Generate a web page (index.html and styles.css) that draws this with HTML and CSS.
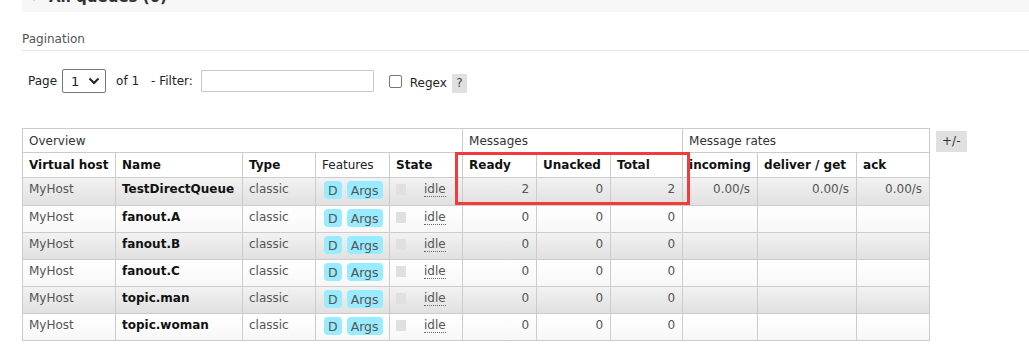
FILE: index.html
```html
<!DOCTYPE html>
<html lang="en">
<head>
    <meta charset="UTF-8">
    <title>Queues</title>
    <link rel="stylesheet" href="styles.css">
</head>
<body>
    <div class="section-head">
        <span class="arrow"></span>
        <h2>All queues (6)</h2>
    </div>

    <h3 class="pagination-title">Pagination</h3>

    <div class="filter-row">
        <span class="label">Page</span>
        <span class="select">1
            <svg width="12" height="8" viewBox="0 0 12 8"><path d="M1.5 1.5 L6 6 L10.5 1.5" fill="none" stroke="#222" stroke-width="2"/></svg>
        </span>
        <span class="label of">of 1</span>
        <span class="label">- Filter:</span>
        <input type="text" class="filter-input">
        <span class="checkbox"></span>
        <span class="label regex">Regex</span>
        <span class="help">?</span>
    </div>

    <div class="table-wrap">
        <div class="table-box">
            <table class="list">
                <colgroup>
                    <col style="width:93px"><col style="width:127px"><col style="width:73px"><col style="width:74px"><col style="width:73px">
                    <col style="width:74px"><col style="width:74px"><col style="width:72px">
                    <col style="width:75px"><col style="width:99px"><col style="width:73px">
                </colgroup>
                <thead>
                    <tr class="group">
                        <th colspan="5">Overview</th>
                        <th colspan="3">Messages</th>
                        <th colspan="3">Message rates</th>
                    </tr>
                    <tr class="cols">
                        <th>Virtual host</th>
                        <th>Name</th>
                        <th>Type</th>
                        <th class="plain">Features</th>
                        <th>State</th>
                        <th>Ready</th>
                        <th>Unacked</th>
                        <th>Total</th>
                        <th>incoming</th>
                        <th>deliver / get</th>
                        <th>ack</th>
                    </tr>
                </thead>
                <tbody id="rows"></tbody>
            </table>
            <div class="highlight"></div>
        </div>
        <span class="toggle">+/-</span>
    </div>

    <script>
        var queues = [
            { name: 'TestDirectQueue', ready: 2, unacked: 0, total: 2, rates: true },
            { name: 'fanout.A', ready: 0, unacked: 0, total: 0 },
            { name: 'fanout.B', ready: 0, unacked: 0, total: 0 },
            { name: 'fanout.C', ready: 0, unacked: 0, total: 0 },
            { name: 'topic.man', ready: 0, unacked: 0, total: 0 },
            { name: 'topic.woman', ready: 0, unacked: 0, total: 0 }
        ];

        var html = '';
        queues.forEach(function(q, i) {
            var rate = q.rates ? '0.00/s' : '';
            var cls = (i % 2 === 0 ? 'alt1' : 'alt2') + (i === 0 ? ' first' : '');
            html += '<tr class="' + cls + '">' +
                '<td class="muted">MyHost</td>' +
                '<td class="name">' + q.name + '</td>' +
                '<td class="muted">classic</td>' +
                '<td class="features"><abbr class="badge">D</abbr><abbr class="badge">Args</abbr></td>' +
                '<td class="state"><span class="state-box"></span><abbr class="idle">idle</abbr></td>' +
                '<td class="num">' + q.ready + '</td>' +
                '<td class="num">' + q.unacked + '</td>' +
                '<td class="num">' + q.total + '</td>' +
                '<td class="num">' + rate + '</td>' +
                '<td class="num">' + rate + '</td>' +
                '<td class="num">' + rate + '</td>' +
                '</tr>';
        });
        document.getElementById('rows').innerHTML = html;
    </script>
</body>
</html>
```

FILE: styles.css
```css
body {
    margin: 0;
    padding-left: 22px;
    font-family: "DejaVu Sans", Verdana, sans-serif;
    font-size: 12px;
    color: #484848;
    background: #fff;
}
.section-head {
    display: flex;
    align-items: center;
    height: 30px;
    margin-top: -18px;
    background-color: #f7f7f7;
    padding-left: 8px;
}
.section-head h2 {
    margin: 0;
    font-size: 15px;
    font-weight: bold;
    color: #333;
}
.arrow {
    width: 0;
    height: 0;
    border-left: 4px solid transparent;
    border-right: 4px solid transparent;
    border-top: 5px solid #aaa;
    margin-right: 11px;
    margin-top: 2px;
}
.pagination-title {
    margin: 20px 0 0 0;
    padding-bottom: 4px;
    font-size: 12px;
    font-weight: normal;
    color: #555;
    border-bottom: 1px solid #e2e2e2;
}
.filter-row {
    display: flex;
    align-items: center;
    margin-top: 17px;
    padding-left: 6px;
    height: 26px;
    color: #222;
}
.label {
    font-size: 12px;
}
.select {
    display: flex;
    align-items: center;
    justify-content: space-between;
    box-sizing: border-box;
    width: 44px;
    height: 24px;
    margin-left: 5px;
    padding: 0 5px 0 8px;
    border: 1px solid #767676;
    border-radius: 2px;
    font-size: 13px;
}
.of {
    margin-left: 10px;
    margin-right: 12px;
}
.filter-input {
    box-sizing: border-box;
    width: 173px;
    height: 22px;
    margin: 0 0 0 8px;
    border: 1px solid #c8c8c8;
    border-radius: 1px;
    padding: 0;
}
.checkbox {
    box-sizing: border-box;
    width: 13px;
    height: 13px;
    margin-left: 15px;
    border: 1px solid #767676;
    border-radius: 2px;
}
.regex {
    margin-left: 8px;
    margin-top: 4px;
}
.help {
    display: flex;
    align-items: center;
    justify-content: center;
    width: 15px;
    height: 19px;
    margin-left: 5px;
    margin-top: 4px;
    background-color: #e0e0e0;
    color: #444;
}
.table-wrap {
    display: flex;
    align-items: flex-start;
    margin-top: 34px;
}
.table-box {
    position: relative;
}
table.list {
    border-collapse: collapse;
    table-layout: fixed;
    width: 907px;
}
table.list th,
table.list td {
    border: 1px solid #cccccc;
    padding: 0 6px;
    text-align: left;
    white-space: nowrap;
    overflow: hidden;
}
table.list th {
    background: #fff;
    color: #111;
}
tr.group th {
    height: 23px;
    font-weight: normal;
    color: #333;
}
tr.cols th {
    height: 24px;
    font-weight: bold;
}
tr.cols th.plain {
    font-weight: normal;
    color: #222;
}
table.list td {
    height: 27px;
    vertical-align: top;
    padding-top: 4px;
    padding-bottom: 0;
    box-sizing: border-box;
    color: #555;
}
tr.alt1 {
    background-color: #eee;
    background-image: linear-gradient(#f2f2f2, #e0e0e0);
}
tr.alt2 {
    background-color: #fff;
    background-image: linear-gradient(#ffffff, #f7f7f7);
}
table.list tr.first td {
    height: 28px;
}
td.muted {
    color: #666;
}
td.name {
    font-weight: bold;
    color: #111 !important;
}
td.num {
    text-align: right !important;
    padding-right: 7px !important;
}
td.features {
    padding-top: 3px !important;
    padding-left: 8px !important;
}
.badge {
    display: inline-block;
    padding: 1px 4px 0 4px;
    height: 17px;
    line-height: 17px;
    margin-right: 5px;
    border-radius: 4px;
    background-color: #99ebff;
    color: #555;
    font-size: 12.5px;
    text-decoration: none;
}
td.state {
    padding-left: 6px !important;
}
.state-box {
    display: inline-block;
    width: 10px;
    height: 11px;
    background-color: #e0e0e0;
    margin-right: 18px;
    vertical-align: top;
    margin-top: 2px;
}
.idle {
    text-decoration: none;
    border-bottom: 1px dotted #666;
    color: #555;
}
.highlight {
    position: absolute;
    left: 433px;
    top: 24px;
    width: 235px;
    height: 53px;
    box-sizing: border-box;
    border: 3px solid #f23c3c;
}
.toggle {
    margin-left: 6px;
    margin-top: 3px;
    padding: 0 6px;
    height: 21px;
    line-height: 21px;
    background-color: #e0e0e0;
    color: #333;
}
```
